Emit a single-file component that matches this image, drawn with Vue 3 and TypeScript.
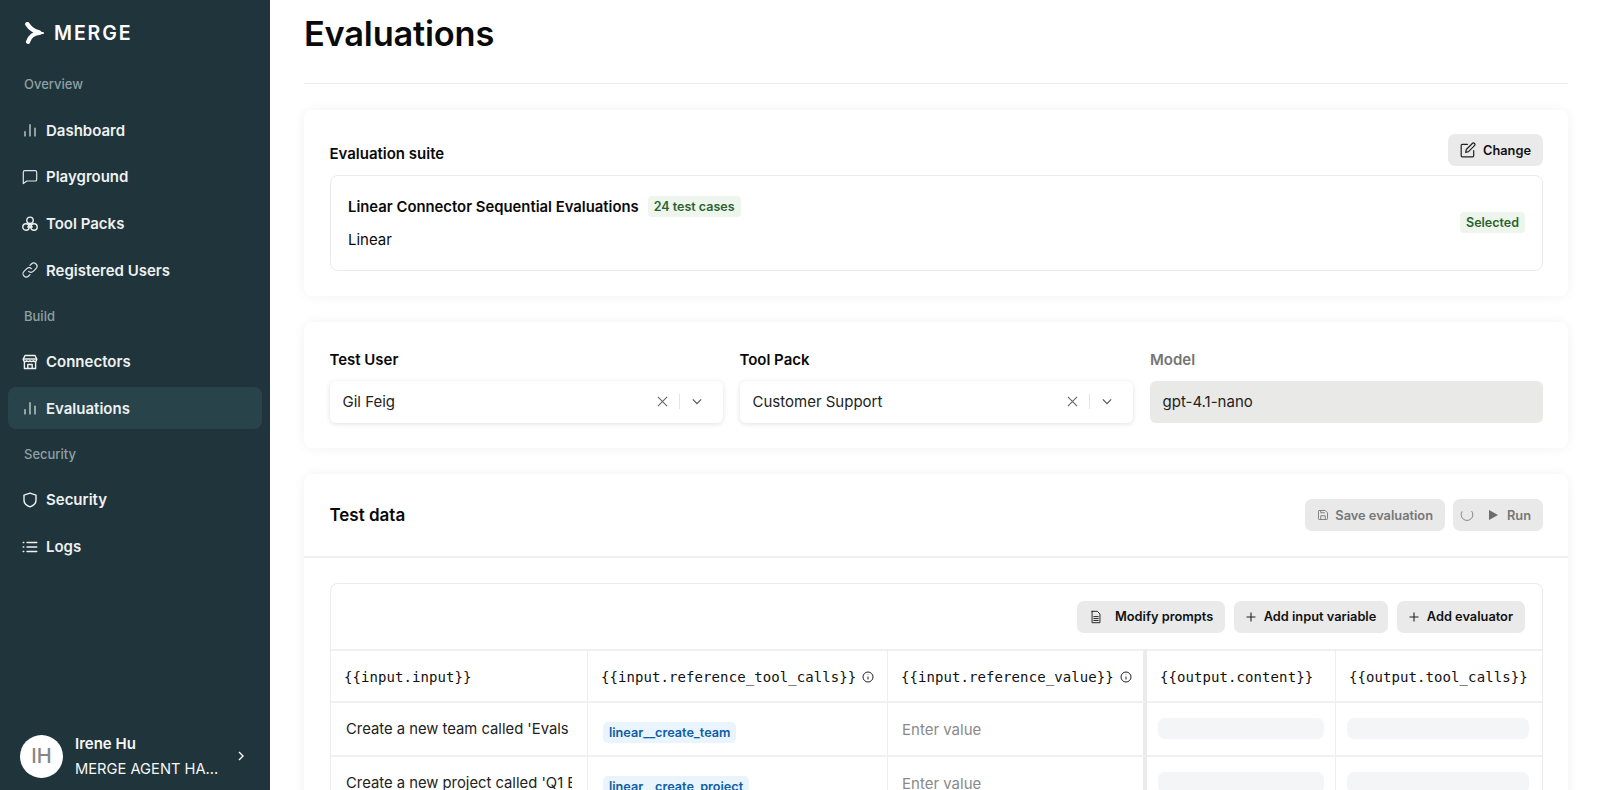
<script setup lang="ts">
const rows = [
  { text: "Create a new team called 'Evals", tool: 'linear__create_team' },
  { text: "Create a new project called 'Q1 Engineering", tool: 'linear__create_project' },
]
</script>

<template>
  <div class="app">
    <aside class="side">
      <div class="brand">
        <svg class="logo" viewBox="0 0 19 22" width="19" height="22">
          <path d="M2.4 2.2C5 6.2 8.6 9 14 10.4" fill="none" stroke="#fff" stroke-width="4.4" stroke-linecap="round" />
          <path d="M3 19.8C4.6 14.6 8.6 11.6 14 11" fill="none" stroke="#fff" stroke-width="4.2" stroke-linecap="round" />
          <path d="M12 8.6 19 10.4v1.4L12 13Z" fill="#fff" />
        </svg>
        <span class="brand-name">MERGE</span>
      </div>

      <div class="sec first">Overview</div>
      <a class="item">
        <svg class="ic" viewBox="0 0 16 16"><path d="M3 14V9.5M8 14V2.5M13 14V6" /></svg>
        <span>Dashboard</span>
      </a>
      <a class="item">
        <svg class="ic" viewBox="0 0 16 16"><path d="M1.3 3.2c0-.9.7-1.6 1.6-1.6h10.2c.9 0 1.6.7 1.6 1.6v7.2c0 .9-.7 1.6-1.6 1.6H4.9l-3.6 2.6V3.2Z" /></svg>
        <span>Playground</span>
      </a>
      <a class="item">
        <svg class="ic bold" viewBox="0 0 16 16"><circle cx="8" cy="4.3" r="3.2" /><circle cx="4" cy="11" r="3.2" /><circle cx="12" cy="11" r="3.2" /><path d="M8 7.5 5.8 11h4.4L8 7.5Z" /></svg>
        <span>Tool Packs</span>
      </a>
      <a class="item">
        <svg class="ic" viewBox="0 0 16 16"><path d="M6.6 9.4a3.2 3.2 0 0 0 4.6 0l2.8-2.8a3.2 3.2 0 0 0-4.6-4.6L8 3.4" /><path d="M9.4 6.6a3.2 3.2 0 0 0-4.6 0L2 9.4A3.2 3.2 0 0 0 6.6 14L8 12.6" /></svg>
        <span>Registered Users</span>
      </a>

      <div class="sec">Build</div>
      <a class="item">
        <svg class="ic bold" viewBox="0 0 16 16"><path d="M3 1.5h10l1.7 3.6v.7a1.9 1.9 0 0 1-3.4 1 2.2 2.2 0 0 1-3.3 0 2.2 2.2 0 0 1-3.3 0 1.9 1.9 0 0 1-3.4-1v-.7L3 1.5Z" /><path d="M2.4 7.5v7h11.2v-7M1.4 5h13.2M5.8 14.4v-3.9h4.4v3.9" /></svg>
        <span>Connectors</span>
      </a>
      <a class="item active">
        <svg class="ic" viewBox="0 0 16 16"><path d="M3 14V9.5M8 14V2.5M13 14V6" /></svg>
        <span>Evaluations</span>
      </a>

      <div class="sec">Security</div>
      <a class="item">
        <svg class="ic bold" viewBox="0 0 16 16"><path d="M8 1.2 14 3.2v5c0 3.2-2.6 5.4-6 6.6-3.4-1.2-6-3.4-6-6.6v-5l6-2Z" /></svg>
        <span>Security</span>
      </a>
      <a class="item">
        <svg class="ic bold" viewBox="0 0 16 16"><path d="M5 3.5h9.8M5 8h9.8M5 12.5h9.8M1.2 3.5h.6M1.2 8h.6M1.2 12.5h.6" /></svg>
        <span>Logs</span>
      </a>

      <div class="user">
        <div class="avatar">IH</div>
        <div class="who">
          <div class="name">Irene Hu</div>
          <div class="org">MERGE AGENT HA...</div>
        </div>
        <svg class="chev" viewBox="0 0 12 12" width="12" height="12"><path d="M4 2l4 4-4 4" /></svg>
      </div>
    </aside>

    <main class="main">
      <h1 class="title">Evaluations</h1>
      <div class="rule"></div>

      <section class="card suite">
        <div class="suite-head">
          <div class="suite-label">Evaluation suite</div>
          <button class="btn">
            <svg class="bi" viewBox="0 0 16 16"><path d="M7.5 2.3H2.2a1 1 0 0 0-1 1v10.5a1 1 0 0 0 1 1h10.5a1 1 0 0 0 1-1V8.5" /><path d="M12.3 1.5a1.5 1.5 0 0 1 2.2 2.2L8.5 9.7l-2.9.7.7-2.9 6-6Z" /></svg>
            Change
          </button>
        </div>
        <div class="suite-box">
          <div>
            <div class="suite-title">
              <strong>Linear Connector Sequential Evaluations</strong>
              <span class="pill">24 test cases</span>
            </div>
            <div class="suite-sub">Linear</div>
          </div>
          <span class="pill raised">Selected</span>
        </div>
      </section>

      <section class="card fields">
        <div class="field">
          <label>Test User</label>
          <div class="select">
            <span class="val">Gil Feig</span>
            <svg class="sel-ic" viewBox="0 0 12 12"><path d="M1 1l10 10M11 1 1 11" /></svg>
            <i class="sep"></i>
            <svg class="sel-ic small" viewBox="0 0 12 8"><path d="M1 1.5 6 6.5l5-5" /></svg>
          </div>
        </div>
        <div class="field">
          <label>Tool Pack</label>
          <div class="select">
            <span class="val">Customer Support</span>
            <svg class="sel-ic" viewBox="0 0 12 12"><path d="M1 1l10 10M11 1 1 11" /></svg>
            <i class="sep"></i>
            <svg class="sel-ic small" viewBox="0 0 12 8"><path d="M1 1.5 6 6.5l5-5" /></svg>
          </div>
        </div>
        <div class="field off">
          <label>Model</label>
          <div class="select disabled"><span class="val">gpt-4.1-nano</span></div>
        </div>
      </section>

      <section class="card data">
        <header class="data-head">
          <h2>Test data</h2>
          <div class="actions">
            <button class="btn dim">
              <svg class="bi sm" viewBox="0 0 16 16"><path d="M3 2h8l3 3v8a1 1 0 0 1-1 1H3a1 1 0 0 1-1-1V3a1 1 0 0 1 1-1Z" /><path d="M5 14V9h6v5M5 2v3h5" /></svg>
              Save evaluation
            </button>
            <button class="btn dim run">
              <svg class="spin" viewBox="0 0 14 14"><path d="M2.2 3.4a5.8 5.8 0 1 0 9.4-.3" /></svg>
              <svg class="play" viewBox="0 0 10 10"><path d="M1 0l9 5-9 5Z" /></svg>
              Run
            </button>
          </div>
        </header>
        <div class="data-body">
          <div class="table">
            <div class="tools">
              <button class="btn">
                <svg class="bi doc" viewBox="0 0 16 16"><path d="M3.5 1.5h6l3 3v10h-9v-13Z" /><path d="M5.5 7.5h5M5.5 9.8h5M5.5 12h5" /></svg>
                Modify prompts
              </button>
              <button class="btn">
                <svg class="plus" viewBox="0 0 10 10"><path d="M5 .5v9M.5 5h9" /></svg>
                Add input variable
              </button>
              <button class="btn">
                <svg class="plus" viewBox="0 0 10 10"><path d="M5 .5v9M.5 5h9" /></svg>
                Add evaluator
              </button>
            </div>
            <div class="grid">
              <div class="c h">{{ '\{\{input.input\}\}' }}</div>
              <div class="c h">{{ '\{\{input.reference_tool_calls\}\}' }}
                <svg class="info" viewBox="0 0 12 12"><circle cx="6" cy="6" r="5" /><path d="M6 5.5v3M6 3.4v.4" /></svg>
              </div>
              <div class="c h thick">{{ '\{\{input.reference_value\}\}' }}
                <svg class="info" viewBox="0 0 12 12"><circle cx="6" cy="6" r="5" /><path d="M6 5.5v3M6 3.4v.4" /></svg>
              </div>
              <div class="c h">{{ '\{\{output.content\}\}' }}</div>
              <div class="c h last">{{ '\{\{output.tool_calls\}\}' }}</div>
              <template v-for="r in rows" :key="r.tool">
                <div class="c body"><span class="clip">{{ r.text }}</span></div>
                <div class="c body"><span class="tag">{{ r.tool }}</span></div>
                <div class="c body thick ph">Enter value</div>
                <div class="c body sk"><i class="skel"></i></div>
                <div class="c body sk last"><i class="skel"></i></div>
              </template>
            </div>
          </div>
        </div>
      </section>
    </main>
  </div>
</template>

<style>
html, body { margin: 0; background: #fff; overflow: hidden; }
</style>

<style scoped>
.app {
  width: 1600px; height: 790px; display: flex; overflow: hidden; background: #fff;
  font-family: Inter, "Liberation Sans", sans-serif; color: #0a0a0a;
}
.side {
  width: 270px; flex: none; height: 790px; box-sizing: border-box; background: #20343b;
  display: flex; flex-direction: column; padding: 0 8px; color: #f1f3f3;
}
.brand { display: flex; align-items: center; gap: 10px; padding: 22px 0 0 17px; height: 22px; }
.logo { flex: none; }
.brand-name { font-size: 19.5px; font-weight: 600; letter-spacing: 1.9px; color: #fff; line-height: 22px; }
.sec { font-size: 13px; font-weight: 500; color: #8fa0a4; line-height: 16px; padding: 12px 0 16.5px 16px; }
.sec.first { padding: 32px 0 17px 16px; }
.item {
  display: flex; align-items: center; gap: 8px; height: 42px; margin-bottom: 4.8px; padding-left: 14px;
  font-size: 15px; font-weight: 600; border-radius: 8px; color: #eef1f1;
}
.item.active { background: #29434b; }
.ic { width: 16px; height: 16px; fill: none; stroke: #dfe4e5; stroke-width: 1.2; stroke-linecap: round; stroke-linejoin: round; flex: none; }
.ic.bold { stroke-width: 1.4; stroke: #eef1f1; }
.user { margin-top: auto; display: flex; align-items: center; padding: 0 0 12px 12px; height: 44px; }
.avatar {
  width: 43px; height: 43px; border-radius: 50%; background: #fff; color: #858585; font-size: 20px; font-weight: 500;
  display: flex; align-items: center; justify-content: center; flex: none;
}
.who { margin-left: 12px; width: 150px; }
.name { font-size: 15px; font-weight: 600; line-height: 20px; margin-bottom: 5px; padding-top: 1px; color: #f6f7f7; }
.org { font-size: 14.7px; line-height: 20px; color: #f6f7f7; white-space: nowrap; }
.chev { fill: none; stroke: #fff; stroke-width: 1.4; margin-left: 10px; }

.main { flex: 1; min-width: 0; padding: 0 32px 0 34px; }
.title { margin: 0; font-size: 34.4px; font-weight: 600; line-height: 42px; padding-top: 13px; letter-spacing: -.2px; }
.rule { height: 1px; background: #ececea; margin-top: 28px; }
.card { background: #fff; border-radius: 8px; box-shadow: 0 0 12px rgba(0,0,0,.06); }
.suite { margin-top: 26px; padding: 24px 25px 25px 26px; height: 186px; box-sizing: border-box; }
.suite-head { display: flex; justify-content: space-between; align-items: flex-end; }
.suite-label { font-size: 15px; font-weight: 600; line-height: 20px; padding-bottom: 2px; margin-left: -.6px; }
.btn {
  font-family: inherit; display: inline-flex; align-items: center; height: 32px; border: 0; border-radius: 7px;
  background: #eaeaea; color: #111; font-size: 12.8px; font-weight: 600; padding: 0 12px; box-sizing: border-box;
}
.bi { width: 16px; height: 16px; fill: none; stroke: #222; stroke-width: 1.2; stroke-linecap: round; stroke-linejoin: round; margin-right: 7px; }
.bi.sm { width: 12px; height: 12px; stroke: #777; margin-right: 6px; }
.bi.doc { width: 14px; height: 14px; margin-right: 12px; stroke-width: 1.1; }
.plus { width: 10px; height: 10px; fill: none; stroke: #222; stroke-width: 1.1; margin-right: 7.5px; }
.suite-box {
  margin-top: 9px; height: 96px; box-sizing: border-box; border: 1px solid #ebebeb; border-radius: 8px;
  padding: 0 17px; display: flex; justify-content: space-between; align-items: center;
}
.suite-title { display: flex; align-items: center; gap: 9px; }
.suite-title strong { font-size: 14.85px; font-weight: 600; }
.pill {
  display: inline-flex; align-items: center; height: 21px; padding: 0 6px; border-radius: 4px;
  background: #eef5ec; color: #2a6331; font-size: 12.5px; font-weight: 600;
}
.suite-title .pill { margin-top: -1px; }
.pill.raised { margin-top: -2px; }
.suite-sub { font-size: 15px; margin-top: 13px; line-height: 20px; }

.fields { margin-top: 26px; height: 126px; box-sizing: border-box; padding: 28px 25px 0 26px; display: grid; grid-template-columns: repeat(3, 393px); column-gap: 17px; }
.field label { display: block; font-size: 15px; font-weight: 600; line-height: 20px; margin: 0 0 11px -.6px; }
.off label { color: #747474; margin-left: 0; }
.select {
  height: 42px; box-sizing: border-box; border-radius: 6px; box-shadow: 0 1px 5px rgba(0,0,0,.12); display: flex; align-items: center;
  padding: 0 21px 1px 12.5px; font-size: 15px; background: #fff; color: #222;
}
.select.disabled { background: #e9e9e7; box-shadow: none; }
.val { flex: 1; }
.sel-ic { width: 11px; height: 11px; fill: none; stroke: #666; stroke-width: 1.2; }
.sel-ic.small { height: 7px; width: 10px; stroke: #555; stroke-width: 1.4; }
.sep { width: 1px; height: 15px; background: #e4e4e4; margin: 0 12px 0 11px; }

.data { margin-top: 26px; height: 340px; }
.data-head { height: 84px; box-sizing: border-box; border-bottom: 2px solid #efefef; display: flex; justify-content: space-between; align-items: center; padding: 0 25px 0 26px; }
.data-head h2 { margin: 0 0 0 -.6px; font-size: 17px; font-weight: 600; }
.actions { display: flex; gap: 8px; }
.btn.dim { color: #777; background: #e9e9e9; }
.run { padding: 0 12px 0 7px; }
.spin { width: 14px; height: 14px; fill: none; stroke: #888; stroke-width: 1; margin-right: 14px; }
.play { width: 10px; height: 10px; fill: #6d6d6d; margin-right: 9px; }
.data-body { padding: 25px 25px 0 26px; }
.table { border: 1px solid #ececec; border-bottom: 0; border-radius: 8px 8px 0 0; overflow: hidden; width: 1213px; box-sizing: border-box; }
.tools { height: 65px; box-sizing: border-box; display: flex; justify-content: flex-end; align-items: center; gap: 9px; padding: 0 17px 0 0; }
.grid { display: grid; grid-template-columns: 257px 300px 259px 189px 206px; grid-template-rows: 52px; grid-auto-rows: 54px; }
.c { box-sizing: border-box; border-top: 2px solid #f0f0f0; border-right: 1px solid #eee; display: flex; align-items: center; overflow: hidden; white-space: nowrap; }
.c.last { border-right: 0; }
.c.thick { border-right: 4px solid #ebebeb; }
.h { font-family: "DejaVu Sans Mono", "Liberation Mono", monospace; font-size: 14px; padding: 1px 0 0 13px; color: #111; gap: 6px; letter-spacing: .08px; }
.info { width: 12px; height: 12px; fill: none; stroke: #222; stroke-width: 1; flex: none; }
.body { font-size: 14.8px; padding-left: 15px; color: #222; }
.clip { display: block; width: 226px; overflow: hidden; }
.tag { font-size: 12.65px; font-weight: 600; color: #0e5ea5; background: #e9f4fc; border-radius: 5px; padding: 0 6px; line-height: 21px; margin-top: 7px; }
.ph { color: #8a8a8a; padding-left: 14px; font-size: 15px; }
.sk { padding: 0 11px; }
.sk.last { padding: 0 13px 0 11px; }
.skel { display: block; width: 100%; height: 21px; border-radius: 7px; background: #f4f5f6; margin-top: -1px; }
</style>
